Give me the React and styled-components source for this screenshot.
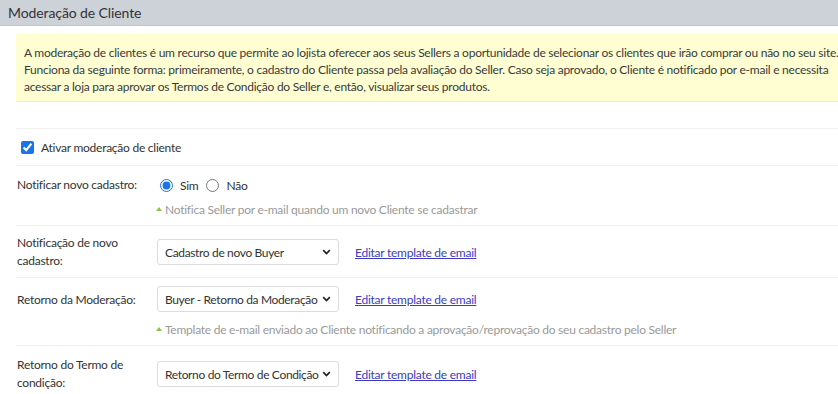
import React from "react"
import styled, { createGlobalStyle } from "styled-components"

const GlobalStyle = createGlobalStyle`
  body {
    margin: 0;
    background: #fff;
    font-family: "Lato", "Liberation Sans", sans-serif;
    color: #333;
    letter-spacing: -0.25px;
  }
`

const Header = styled.div`
  height: 26px;
  background: #cdd2d9;
  border-bottom: 1px solid #bfc5cc;
  box-sizing: border-box;
  padding-left: 8px;
  display: flex;
  align-items: center;
  font-size: 14px;
  letter-spacing: -0.1px;
  color: #333;
`

const Body = styled.div`
  padding-left: 16px;
`

const Notice = styled.div`
  margin-top: 8px;
  padding: 10px 8px;
  background: #fefed2;
  border-bottom: 1px solid #f1efc2;
  font-size: 12px;
  line-height: 17px;
  color: #3a3a3a;
  height: 68px;
  box-sizing: border-box;
  white-space: nowrap;
`

const Spacer = styled.div`
  height: 26px;
`

const Row = styled.div`
  border-top: 1px solid #efefef;
  padding: ${(p) => p.pad || "8px 0 8px 1px"};
  display: flex;
  align-items: ${(p) => (p.top ? "flex-start" : "center")};
  font-size: 12px;
`

const Label = styled.div`
  width: 140px;
  flex-shrink: 0;
  line-height: 18px;
  padding-top: ${(p) => (p.offset ? p.offset : 0)}px;
`

const Control = styled.div`
  display: flex;
  flex-direction: column;
`

const Inline = styled.div`
  display: flex;
  align-items: center;
  min-height: 22px;
`

const Check = styled.label`
  display: flex;
  align-items: center;
  gap: 7px;
  height: 20px;
  padding-left: 4px;
  input {
    margin: 0;
    width: 13px;
    height: 13px;
    accent-color: #1a73e8;
  }
`

const Radio = styled.label`
  display: flex;
  align-items: center;
  gap: 7px;
  margin-right: 8px;
  input {
    margin: 0;
    width: 13px;
    height: 13px;
    accent-color: #1a73e8;
  }
`

const Hint = styled.div`
  margin-top: ${(p) => p.gap || 6}px;
  font-size: 12px;
  line-height: 14px;
  color: #9a9a9a;
  display: flex;
  align-items: center;
  gap: 3px;
  margin-left: -1px;
`

const Arrow = styled.span`
  width: 0;
  height: 0;
  border-left: 3px solid transparent;
  border-right: 3px solid transparent;
  border-bottom: 4px solid #8bc34a;
  margin-bottom: 3px;
`

const SelectWrap = styled.div`
  position: relative;
  width: 182px;
  height: 26px;
  svg {
    position: absolute;
    right: 8px;
    top: 10px;
    pointer-events: none;
  }
`

const Select = styled.select`
  appearance: none;
  width: 100%;
  height: 100%;
  border: 1px solid #dcdcdc;
  border-radius: 3px;
  background: #fff;
  padding: 0 8px 0 7px;
  font-family: inherit;
  font-size: 12px;
  letter-spacing: -0.35px;
  color: #333;
`

const Link = styled.a`
  margin-left: 16px;
  color: #3b3bc4;
  font-size: 12px;
  text-decoration: underline;
`

const Chevron = () => (
  <svg width="9" height="6" viewBox="0 0 9 6">
    <path d="M1.2 1.2 L4.5 4.5 L7.8 1.2" fill="none" stroke="#222" strokeWidth="1.7" />
  </svg>
)

const TemplateSelect = ({ value }) => (
  <Inline>
    <SelectWrap>
      <Select defaultValue={value}>
        <option>{value}</option>
      </Select>
      <Chevron />
    </SelectWrap>
    <Link href="#">Editar template de email</Link>
  </Inline>
)

export default function App() {
  return (
    <>
      <GlobalStyle />
      <Header>Moderação de Cliente</Header>
      <Body>
        <Notice>
          A moderação de clientes é um recurso que permite ao lojista oferecer aos seus Sellers a oportunidade de selecionar os clientes que irão comprar ou não no seu site.
          <br />
          Funciona da seguinte forma: primeiramente, o cadastro do Cliente passa pela avaliação do Seller. Caso seja aprovado, o Cliente é notificado por e-mail e necessita
          <br />
          acessar a loja para aprovar os Termos de Condição do Seller e, então, visualizar seus produtos.
        </Notice>
        <Spacer />
        <Row>
          <Check>
            <input type="checkbox" defaultChecked />
            Ativar moderação de cliente
          </Check>
        </Row>
        <Row top pad="8px 0 8px 1px">
          <Label offset={2}>Notificar novo cadastro:</Label>
          <Control>
            <Inline>
              <Radio style={{ marginLeft: 3 }}>
                <input type="radio" name="notif" defaultChecked />
                Sim
              </Radio>
              <Radio>
                <input type="radio" name="notif" />
                Não
              </Radio>
            </Inline>
            <Hint gap={7}>
              <Arrow />
              Notifica Seller por e-mail quando um novo Cliente se cadastrar
            </Hint>
          </Control>
        </Row>
        <Row pad="8px 0 7px 1px">
          <Label>
            Notificação de novo
            <br />
            cadastro:
          </Label>
          <TemplateSelect value="Cadastro de novo Buyer" />
        </Row>
        <Row top pad="8px 0 8px 1px">
          <Label offset={5}>Retorno da Moderação:</Label>
          <Control>
            <TemplateSelect value="Buyer - Retorno da Moderação" />
            <Hint gap={11}>
              <Arrow />
              Template de e-mail enviado ao Cliente notificando a aprovação/reprovação do seu cadastro pelo Seller
            </Hint>
          </Control>
        </Row>
        <Row pad="10px 0 8px 1px">
          <Label>
            Retorno do Termo de
            <br />
            condição:
          </Label>
          <TemplateSelect value="Retorno do Termo de Condição" />
        </Row>
      </Body>
    </>
  )
}
